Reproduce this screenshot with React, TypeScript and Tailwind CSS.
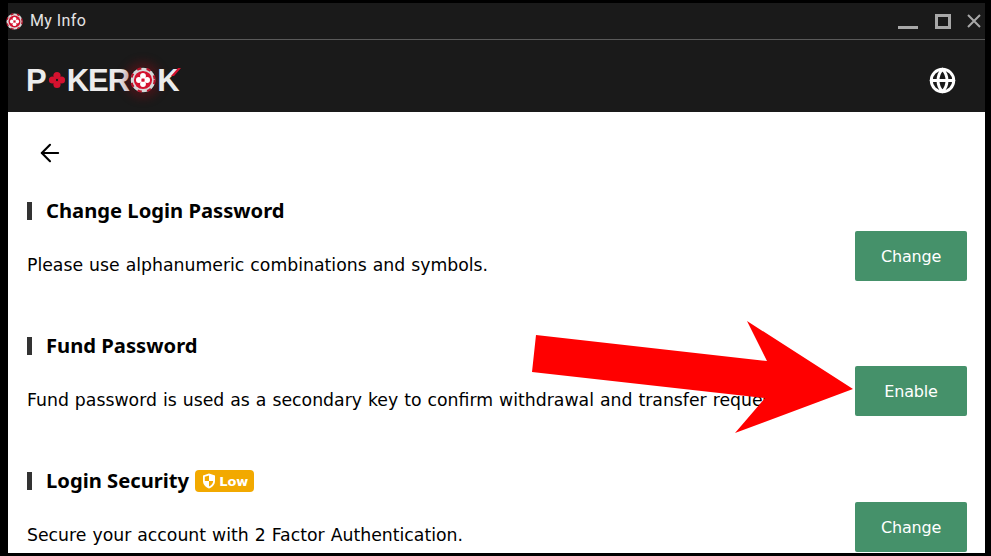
import { ArrowLeft, Globe } from "lucide-react";

const sections = [
  { title: "Change Login Password", desc: "Please use alphanumeric combinations and symbols.", action: "Change" },
  { title: "Fund Password", desc: "Fund password is used as a secondary key to confirm withdrawal and transfer requests.", action: "Enable" },
  { title: "Login Security", desc: "Secure your account with 2 Factor Authentication.", action: "Change", badge: true },
];

function Chip({ size }: { size: number }) {
  return (
    <svg width={size} height={size} viewBox="0 0 24 24">
      <circle cx="12" cy="12" r="11.3" fill="#d8d8d8" />
      <circle cx="12" cy="12" r="10.8" fill="none" stroke="#b3142a" strokeWidth="2" strokeDasharray="4 5" />
      <circle cx="12" cy="12" r="8.4" fill="#d4122f" />
      <circle cx="12" cy="8.2" r="2.7" fill="#fff" />
      <circle cx="8.2" cy="12" r="2.7" fill="#fff" />
      <circle cx="15.8" cy="12" r="2.7" fill="#fff" />
      <circle cx="12" cy="15.8" r="2.7" fill="#fff" />
      <circle cx="12" cy="12" r="1.5" fill="#d4122f" />
    </svg>
  );
}

function Logo() {
  const letter = "font-['Liberation_Sans',sans-serif] font-bold text-[31px] leading-none text-[#ececec]";
  return (
    <div className="flex items-center h-[30px] -ml-[1px]">
      <span className={letter}>P</span>
      <svg width="18" height="18" viewBox="0 0 18 18" className="mx-[1px]">
        <g fill="#d4122f">
          <circle cx="9" cy="4.5" r="3.6" />
          <circle cx="4.5" cy="9" r="3.6" />
          <circle cx="13.5" cy="9" r="3.6" />
          <circle cx="9" cy="13.5" r="3.6" />
        </g>
      </svg>
      <span className={letter + " tracking-[-1px]"}>KER</span>
      <div className="mx-[1px] rounded-full shadow-[0_0_10px_5px_rgba(120,15,25,0.45)]">
        <Chip size={26} />
      </div>
      <span className={letter + " relative"}>
        K
        <svg width="20" height="14" viewBox="0 0 20 14" className="absolute left-[4px] top-[2px]">
          <path d="M10 9 L17 1 H20 L13 9 Z" fill="#d4122f" />
        </svg>
      </span>
    </div>
  );
}

export default function App() {
  return (
    <div className="relative w-[991px] h-[556px] overflow-hidden bg-black pl-2 pr-[6px] pt-[3px] pb-[3px] font-['Noto_Sans',sans-serif]">
      <div className="flex flex-col h-full bg-[#1a1a1a]">
        {/* title bar */}
        <div className="flex items-center h-9 shrink-0 border-b border-[#5a5a5a] box-content">
          <div className="ml-[-2px]">
            <Chip size={17} />
          </div>
          <span className="ml-[7px] text-[16px] tracking-[0.4px] text-[#e4e4e4] font-['Roboto',sans-serif]">My Info</span>
          <div className="ml-auto flex items-center text-[#a8a8a8]">
            <div className="w-[20px] h-[3px] bg-[#a8a8a8] mt-[12px]" />
            <div className="ml-[17px] w-[16px] h-[15px] border-[3px] border-[#a8a8a8]" />
            <svg width="16" height="16" viewBox="0 0 16 16" className="ml-[15px] mr-[3px]">
              <path d="M2 2 L14 14 M14 2 L2 14" stroke="#a8a8a8" strokeWidth="2" />
            </svg>
          </div>
        </div>

        {/* logo header */}
        <div className="flex items-center justify-between h-[72px] shrink-0 pl-[19px] pr-[29px] pt-[8px]">
          <Logo />
          <Globe size={27} strokeWidth={2.6} className="text-white" />
        </div>

        {/* content */}
        <div className="flex-1 min-h-0 overflow-hidden bg-white pl-[19px] pr-[18px]">
          <div className="h-[84px] pt-[27px] pl-[9px]">
            <ArrowLeft size={28} strokeWidth={1.8} className="text-black" />
          </div>
          {sections.map((s) => (
            <section key={s.title} className="h-[135px]">
              <div className="flex items-center gap-[6px] h-[30px]">
                <div className="w-[5px] h-[18px] bg-[#333333]" />
                <h2 className="ml-[8px] -translate-y-px text-[20.2px] font-bold text-black leading-none">{s.title}</h2>
                {s.badge && (
                  <span className="flex items-center gap-[3px] h-[22px] w-[59px] pl-[7px] rounded-[4px] bg-[#f2a900] text-white text-[13px] font-bold font-['DejaVu_Sans',sans-serif] leading-none">
                    <svg width="14" height="16" viewBox="0 0 14 16">
                      <path d="M7 0.5 L13 2.5 V8 C13 11.5 10.5 14 7 15.5 C3.5 14 1 11.5 1 8 V2.5 Z" fill="#fff" />
                      <path d="M7 2.5 V8 H2.8 V3.7 Z M7 8 H11.2 C11 10.5 9.5 12.4 7 13.5 Z" fill="#f2a900" />
                    </svg>
                    Low
                  </span>
                )}
              </div>
              <div className="flex items-center justify-between h-[50px] mt-[5px] font-['DejaVu_Sans',sans-serif]">
                <p className="mt-[20px] text-[17.3px] [word-spacing:0.5px] leading-none text-black whitespace-nowrap">{s.desc}</p>
                <button
                  className={
                    s.badge
                      ? "w-[112px] h-[50px] shrink-0 translate-y-px rounded-[2px] bg-[#45916a] pt-[1px] text-white text-[16px] tracking-[-0.2px]"
                      : "w-[112px] h-[50px] shrink-0 rounded-[2px] bg-[#45916a] pt-[1px] text-white text-[16px] tracking-[-0.2px]"
                  }
                >
                  {s.action}
                </button>
              </div>
            </section>
          ))}
        </div>
      </div>

      {/* annotation arrow */}
      <svg width="991" height="556" viewBox="0 0 991 556" className="absolute inset-0 pointer-events-none">
        <polygon points="536,335 767,361 747,321 853,389 735,433 765,398 532,372" fill="#ff0000" />
      </svg>
    </div>
  );
}
